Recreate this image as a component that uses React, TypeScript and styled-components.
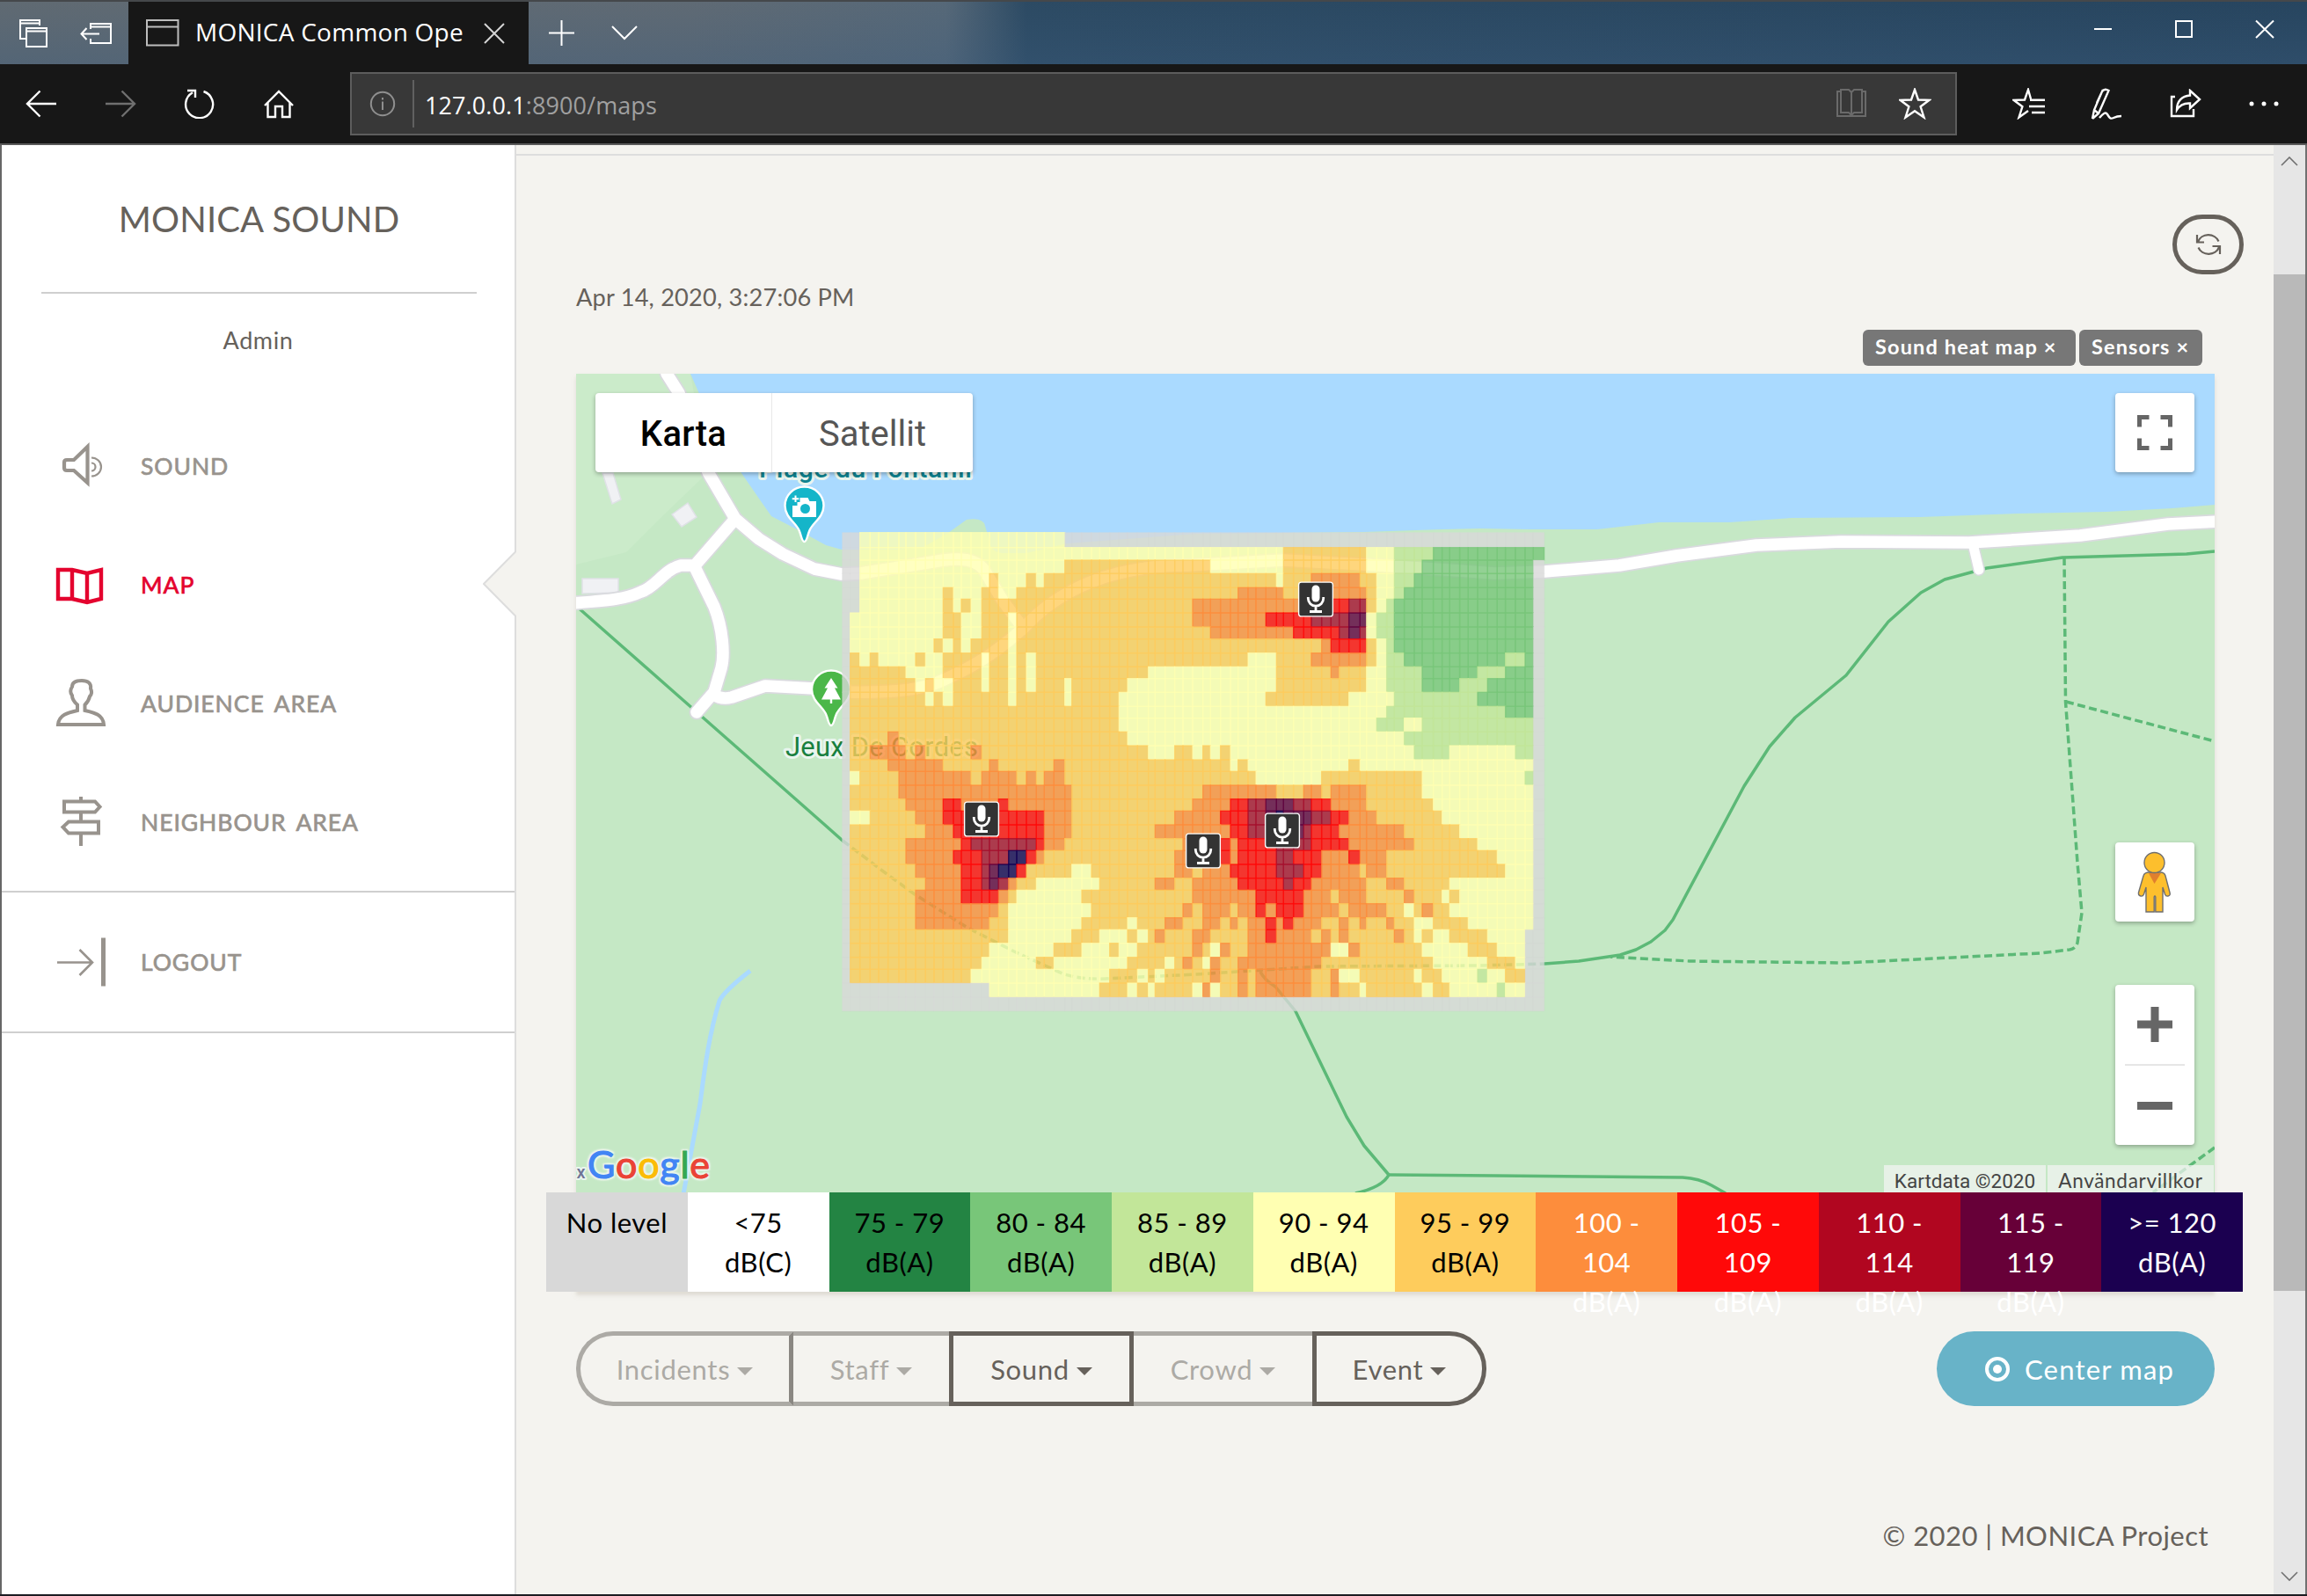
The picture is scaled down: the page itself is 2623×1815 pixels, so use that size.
import React from "react";
import styled, { createGlobalStyle } from "styled-components";

const GlobalStyle = createGlobalStyle`
  *, *::before, *::after { box-sizing: border-box; }
  html, body { margin: 0; padding: 0; background: #f4f3ef; overflow: hidden; }
  svg { display: block; }
`;

const muli = `Lato, "Open Sans", sans-serif`;
const segoe = `"Open Sans", "Noto Sans", sans-serif`;
const brown = "#66615b";

/* ---------- window frame ---------- */

const Window = styled.div`
  width: 2623px;
  height: 1815px;
  display: flex;
  flex-direction: column;
  border-bottom: 2px solid #1c1c22;
  background: #f4f3ef;
  font-family: ${muli};
  color: ${brown};
`;

const TitleBar = styled.div`
  height: 73px;
  flex: none;
  display: flex;
  align-items: stretch;
  border-top: 2px solid #45484b;
  background: linear-gradient(180deg, rgba(40, 70, 95, 0) 0%, rgba(60, 92, 125, 0.35) 100%),
    linear-gradient(90deg, #606a72 0%, #5f6a74 30%, #566878 41%, #2c4a63 44.5%, #27455f 100%);
`;

const TitleIcons = styled.div`
  width: 146px;
  display: flex;
  align-items: center;
  padding-left: 21px;
  gap: 36px;
`;

const Tab = styled.div`
  width: 455px;
  display: flex;
  align-items: center;
  padding: 0 27px 0 20px;
  background: #171717;
  color: #fff;
  font: 400 28px/38px ${segoe};
  letter-spacing: 0.25px;
  white-space: nowrap;
`;

const TabTitle = styled.span`
  flex: 1;
  margin-left: 18px;
  padding-bottom: 3px;
`;

const TabActions = styled.div`
  display: flex;
  align-items: center;
  gap: 41px;
  padding-left: 22px;
  flex: 1;
`;

const WindowButtons = styled.div`
  display: flex;
  gap: 70px;
  padding: 20px 37px 0 0;
`;

const Toolbar = styled.div`
  height: 92px;
  flex: none;
  display: flex;
  align-items: center;
  padding: 0 3px 0 2px;
  background: #171717;
  border-bottom: 2px solid #5a5a5a;
`;

const ToolButton = styled.div<{ $w?: number }>`
  width: ${(p) => p.$w ?? 90}px;
  display: flex;
  justify-content: center;
`;

const AddressBar = styled.div`
  width: 1827px;
  height: 72px;
  margin: 0 37px 0 36px;
  display: flex;
  align-items: center;
  border: 2px solid #5d5d5d;
  background: #383838;
  padding: 0 27px 0 20px;
  font: 400 27px/38px ${segoe};
  color: #a0a0a0;
`;

const AddressDivider = styled.div`
  width: 2px;
  height: 54px;
  margin: 0 12px 0 19px;
  background: #606060;
`;

const Url = styled.span`
  flex: 1;
  padding-top: 3px;
  letter-spacing: 0.1px;
  b { font-weight: 400; color: #fff; }
`;

const AddressIcons = styled.div`
  display: flex;
  gap: 36px;
`;

const Body = styled.div`
  flex: 1;
  display: flex;
  border-left: 2px solid #666;
  border-right: 2px solid #707070;
`;

/* ---------- sidebar ---------- */

const Sidebar = styled.aside`
  width: 585px;
  flex: none;
  background: #fff;
  border-right: 2px solid #dddddd;
`;

const Brand = styled.h1`
  margin: 0 43px 0 45px;
  padding: 60px 0 59px;
  border-bottom: 2px solid #cfcfcf;
  font: 400 40px/48px ${muli};
  letter-spacing: 0.15px;
  text-align: center;
  white-space: nowrap;
`;

const UserName = styled.div`
  margin: 37px 0 59px;
  font: 400 27px/32px ${muli};
  letter-spacing: 0.6px;
  text-align: center;
`;

const Nav = styled.nav`
  padding-bottom: 11px;
  border-bottom: 2px solid #cfcfcf;
`;

const NavItem = styled.div<{ $active?: boolean; $tall?: boolean }>`
  position: relative;
  display: flex;
  align-items: center;
  gap: 38px;
  height: ${(p) => (p.$tall ? 160 : 135)}px;
  padding-left: 60px;
  color: ${(p) => (p.$active ? "#e4032e" : "#98938d")};
  border-bottom: ${(p) => (p.$tall ? "2px solid #cfcfcf" : "none")};
  font: 400 26.5px/32px ${muli};
  letter-spacing: 0.95px;
  word-spacing: 4px;
  -webkit-text-stroke: 0.7px currentColor;
`;

const Notch = styled.svg`
  position: absolute;
  right: -2px;
  top: 29px;
`;

/* ---------- content ---------- */

const Content = styled.main`
  flex: 1;
  display: flex;
  flex-direction: column;
  padding: 10px 67px 0 68px;
`;

const TopRule = styled.div`
  height: 2px;
  flex: none;
  margin: 0 -67px 67px -68px;
  background: #dddddd;
`;

const RefreshButton = styled.button`
  align-self: flex-end;
  margin-right: -33px;
  width: 81px;
  height: 68px;
  padding: 0;
  display: flex;
  align-items: center;
  justify-content: center;
  border: 5px solid ${brown};
  border-radius: 34px;
  background: transparent;
`;

const Timestamp = styled.div`
  margin: 9px 0 21px;
  font: 400 27.2px/33px ${muli};
  letter-spacing: 0.2px;
`;

const Tags = styled.div`
  display: flex;
  justify-content: flex-end;
  gap: 4px;
  padding-right: 14px;
  margin-bottom: 9px;
`;

const Tag = styled.span<{ $w: number }>`
  width: ${(p) => p.$w}px;
  height: 41px;
  padding-left: 14px;
  border-radius: 6px;
  background: #777;
  color: #fff;
  font: 700 23.5px/39px ${muli};
  letter-spacing: 1.15px;
  white-space: nowrap;
`;

const MapCard = styled.section`
  width: 1863px;
  box-shadow: 0 4px 4px rgba(204, 197, 185, 0.5);
`;

const MapView = styled.div`
  position: relative;
  height: 931px;
  overflow: hidden;
  background: #c5e8c5;
`;

const Control = styled.div<{ $top: number; $h?: number }>`
  position: absolute;
  right: 23px;
  top: ${(p) => p.$top}px;
  width: 90px;
  height: ${(p) => p.$h ?? 90}px;
  display: flex;
  flex-direction: column;
  align-items: center;
  justify-content: center;
  border-radius: 4px;
  background: #fff;
  box-shadow: 0 2px 5px rgba(0, 0, 0, 0.3);
`;

const ZoomHalf = styled.div`
  flex: 1;
  display: flex;
  align-items: center;
`;

const ZoomRule = styled.div`
  width: 68px;
  height: 2px;
  background: #e6e6e6;
`;

const TypeControl = styled.div`
  position: absolute;
  left: 22px;
  top: 22px;
  width: 429px;
  height: 90px;
  display: flex;
  border-radius: 4px;
  background: #fff;
  box-shadow: 0 2px 5px rgba(0, 0, 0, 0.3);
`;

const TypeOption = styled.div<{ $selected?: boolean }>`
  flex: ${(p) => (p.$selected ? "0 0 201px" : "1")};
  border-right: ${(p) => (p.$selected ? "1px solid #e8e8e8" : "none")};
  text-align: center;
  font: ${(p) => (p.$selected ? 500 : 400)} 40px/94px Roboto, sans-serif;
  letter-spacing: ${(p) => (p.$selected ? "0.3px" : "0")};
  color: ${(p) => (p.$selected ? "#000" : "#565656")};
`;

const Attribution = styled.div`
  position: absolute;
  right: 1px;
  bottom: 0;
  display: flex;
  gap: 2px;
`;

const AttributionPart = styled.div<{ $w: number; $muli?: boolean }>`
  width: ${(p) => p.$w}px;
  height: 31px;
  background: rgba(245, 245, 245, 0.7);
  color: #444;
  text-align: center;
  white-space: nowrap;
  letter-spacing: ${(p) => (p.$muli ? "0.7px" : "0")};
  font: 400 22.5px/${(p) => (p.$muli ? 36 : 37)}px ${(p) => (p.$muli ? muli : "Roboto, sans-serif")};
`;

const Google = styled.div`
  position: absolute;
  left: 13px;
  bottom: 4px;
  font: 400 43px/56px ${muli};
  letter-spacing: 0.8px;
  -webkit-text-stroke: 1.2px currentColor;
`;

const Letter = styled.span<{ $c: string }>`
  color: ${(p) => p.$c};
  text-shadow: 0 0 3px #edf6ed, 0 0 3px #edf6ed, 2px 2px 2px #edf6ed, -2px -2px 2px #edf6ed, 2px -2px 2px #edf6ed,
    -2px 2px 2px #edf6ed;
`;

const Legend = styled.div`
  display: grid;
  grid-template-columns: repeat(12, 1fr);
  width: 1929px;
  height: 113px;
  margin-left: -34px;
`;

const LegendCell = styled.div<{ $bg: string; $light?: boolean }>`
  height: 113px;
  padding: 12px 20px 0;
  background: ${(p) => p.$bg};
  color: ${(p) => (p.$light ? "#fff" : "#000")};
  text-align: center;
  font: 400 31px/45px ${muli};
  letter-spacing: 0.5px;
`;

const Actions = styled.div`
  position: relative;
  display: flex;
  justify-content: space-between;
  margin-top: 45px;
`;

const ButtonGroup = styled.div`
  display: flex;
`;

const GroupButton = styled.div<{ $w: number; $on?: boolean; $pos?: "first" | "last"; $joined?: boolean }>`
  width: ${(p) => p.$w}px;
  height: 85px;
  display: flex;
  align-items: center;
  justify-content: center;
  gap: 8px;
  color: ${(p) => (p.$on ? brown : "#acaaa5")};
  border: 5px solid currentColor;
  border-left-width: ${(p) => (p.$joined ? 0 : 5)}px;
  border-right: ${(p) => (p.$pos === "first" ? "5px solid #8a8782" : p.$on ? "5px solid currentColor" : "0")};
  border-radius: ${(p) => (p.$pos === "first" ? "42px 0 0 42px" : p.$pos === "last" ? "0 42px 42px 0" : "0")};
  font: 400 31px/40px ${muli};
  letter-spacing: 0.7px;
`;

const Caret = styled.i`
  width: 0;
  height: 0;
  margin-top: 6px;
  border: 9px solid transparent;
  border-top-color: currentColor;
  border-bottom: 0;
`;

const CenterButton = styled.div`
  width: 316px;
  height: 85px;
  display: flex;
  align-items: center;
  gap: 16px;
  padding-left: 54px;
  border-radius: 43px;
  background: #68b3c8;
  color: #fff;
  font: 400 31px/40px ${muli};
  letter-spacing: 1.2px;
`;

const Footer = styled.footer`
  margin: 129px 7px 0 0;
  text-align: right;
  font: 400 31px/37px ${muli};
  letter-spacing: 0.45px;
`;

const Scrollbar = styled.div`
  width: 36px;
  flex: none;
  display: flex;
  flex-direction: column;
  align-items: center;
  background: #e6e6e6;
`;

const ScrollThumb = styled.div`
  width: 36px;
  height: 1156px;
  background: #b9b9b9;
`;

const ScrollArrow = styled.div<{ $h: number; $end?: boolean }>`
  height: ${(p) => p.$h}px;
  display: flex;
  align-items: ${(p) => (p.$end ? "flex-end" : "flex-start")};
  padding: 13px 0 15px;
`;

/* ---------- icons ---------- */

type IconProps = { w: number; h: number; sw?: number; color?: string; fill?: string; children: React.ReactNode };

const Icon = ({ w, h, sw = 2, color = "currentColor", fill = "none", children }: IconProps) => (
  <svg width={w} height={h} viewBox={`0 0 ${w} ${h}`} fill={fill} stroke={color} strokeWidth={sw}>
    {children}
  </svg>
);

const SoundIcon = () => (
  <Icon w={60} h={60} sw={4.2}>
    <path d="M11 26q0-3 3-3h8L37.500 8V49L22 35h-8q-3 0-3-3z" />
    <path d="M42 26.500a4.500 4.500 0 0 1 0 9M42 20.500a11 10.500 0 0 1 0 21" strokeWidth={2.2} />
  </Icon>
);
const MapIcon = () => (
  <Icon w={60} h={60} sw={4.4}>
    <path d="M4 13H20L37 17L53 13V46L37 50L20 46H4ZM20 13V46M37 17V50" />
  </Icon>
);
const UserIcon = () => (
  <Icon w={60} h={60} sw={4}>
    <path d="M4 54C5 43 15 40.500 26 38V31.500C22 28 20 25 20 21C17 17 18 14 20 11C20 6 25 4 31 4C38 4 42 7 41 13C43 17 42 20 40 22C39 27 37 29 34.500 31.500V38C46 40.500 55 43 56 54Z" />
  </Icon>
);
const SignIcon = () => (
  <Icon w={60} h={60} sw={4}>
    <path d="M11 6.500H46L51.500 12.500L46 18.500H11ZM50 29.500H16L9.500 35.500L16 42.500H50ZM30 1V6M30 19V29M30 43V57" />
  </Icon>
);
const LogoutIcon = () => (
  <Icon w={60} h={60} sw={2.600}>
    <path d="M3 30.500H43M28.500 16L43 30.500L28.500 45" />
    <path d="M55.500 2.500V57.500" strokeWidth={5} />
  </Icon>
);

/* ---------- heat map data ---------- */

/* Column and row edges of the noise grid, in thirds of a pixel. */
const COLS = [
  53, 80, 113, 148, 177, 209, 246, 270, 303, 337, 366, 397, 432, 459, 492, 529, 555, 586, 620, 648, 681, 715, 742, 775,
  812, 836, 870, 903, 931, 965, 997, 1026, 1060, 1097, 1120, 1154, 1187, 1215, 1248, 1283, 1309, 1343, 1377, 1403, 1437,
  1464, 1498, 1534, 1558, 1592, 1627, 1653, 1688, 1720, 1748, 1781, 1819, 1841, 1876, 1910, 1936, 1970, 2004, 2031, 2069,
  2099, 2125, 2159, 2188, 2220, 2254, 2287, 2315, 2349, 2382, 2410, 2447,
];
const ROWS = [
  47, 98, 141, 187, 235, 274, 321, 369, 410, 458, 505, 545, 592, 640, 680, 727, 774, 822, 862, 909, 956, 997, 1044, 1091,
  1132, 1179, 1226, 1267, 1313, 1361, 1402, 1448, 1496, 1537, 1584, 1632, 1679,
];

const LEVELS: Record<string, string> = {
  g: "#d8d8d8",
  G: "#78c679",
  c: "#c2e699",
  y: "#ffffb2",
  o: "#fecc5c",
  r: "#fd8d3c",
  R: "#ff0909",
  m: "#a50f2e",
  p: "#5f003e",
  b: "#110052",
};

/* Each entry is a level letter followed by the column at which its run ends. */
const GRID = [
  "g2 y24 g76",
  "g2 y48 o57 y60 c64 G76",
  "g2 y24 o40 y48 o57 y60 c63 G75 g76",
  "g2 y16 o17 y20 o21 y22 o47 y48 o51 r56 o58 y60 c62 G75 g76",
  "g2 y11 o12 y15 o17 y19 o43 r48 o51 r57 o58 y60 c61 G75 g76",
  "g2 y11 o12 y13 o14 y15 o38 r52 R55 m57 o58 y59 c60 G75 g76",
  "g1 y11 o13 y15 o18 y19 o38 r46 R51 m55 p57 y58 c60 G75 g76",
  "g1 y11 o13 y15 o18 y19 o40 r49 R54 m55 p56 m57 y58 c60 G75 g76",
  "g1 y10 o11 y12 o13 y14 o18 y19 o52 r53 R57 o58 y59 c60 G75 g76",
  "g1 o2 y3 o4 y8 o9 y11 o15 y16 o18 y19 o20 y21 o44 y47 o51 r57 o58 y59 c61 G72 c74 G75 g76",
  "g1 o7 y11 o15 y16 o18 y19 o20 y21 o33 y47 o53 r54 o57 y59 c63 G69 c72 G75 g76",
  "g1 o8 y9 o10 y12 o15 y16 o18 y19 o20 y21 o24 y25 o31 y47 o57 y59 c63 G67 c70 G75 g76",
  "g1 o9 y10 o11 y12 o18 y19 o24 y25 o30 y46 o55 y60 c69 G75 g76",
  "g1 o30 y59 c72 G75 g76",
  "g1 o30 y58 c61 y63 c75 g76",
  "g1 o5 r6 o31 y61 c75 g76",
  "g1 o3 r7 o8 r9 o14 r15 o33 y36 o38 y39 o40 y41 o42 y62 c66 y73 c75 g76",
  "g1 o5 r11 o16 r17 o23 r24 o42 y43 o44 y55 o56 y75 g76",
  "g1 y2 o6 r14 o15 r19 o20 r21 o22 r24 o45 y52 o63 y74 c75 g76",
  "g1 o6 r25 o39 r47 o50 r52 o53 r57 o63 y75 g76",
  "g1 o7 r11 R13 r17 R18 r25 o38 r42 R44 m46 p49 m51 R53 r57 o64 y75 g76",
  "g1 y3 o8 r11 R22 r25 o36 r41 R44 m46 p47 b48 p51 m53 R55 r58 o65 y75 g76",
  "g1 o9 r12 R22 r25 o34 r42 R44 m46 p50 m51 R54 r61 o67 y75 g76",
  "g1 o7 r13 R14 m21 R22 r24 o37 r41 R42 r43 R47 m51 R55 r62 o69 y75 g76",
  "g1 o7 r12 R15 m18 b20 R21 r22 o36 r41 R42 r43 R47 m49 R52 r55 R56 r59 o71 y75 g76",
  "g1 o8 r13 R15 m16 p17 b19 R20 o25 y27 o36 r38 o39 r42 R47 m50 R52 r56 o57 r59 o72 y75 g76",
  "g1 o9 r13 R15 m16 p17 m18 r19 o21 y28 o34 r36 o38 r43 R48 m49 R51 r57 o59 r61 o66 y75 g76",
  "g1 o8 r13 R17 r18 o19 y26 o38 r45 R50 r53 o54 r57 o61 r62 o65 y66 o67 y75 g76",
  "g1 o8 r17 o18 y27 o37 r38 o39 r42 o43 r45 R46 r47 R50 r54 o55 r59 o61 y62 o63 r64 o66 y75 g76",
  "g1 o8 r16 o18 y26 o31 y32 o35 r37 o39 r41 o42 r43 o44 r46 R47 r48 R49 r52 o54 r55 o56 r57 o59 r60 o62 y64 o68 y75 g76",
  "g1 o18 y25 o28 y31 o32 y33 o34 r35 o38 r40 o44 r46 R47 r51 o52 r53 o54 r55 o60 r61 o62 y63 o64 y66 o70 y74 g76",
  "g1 o16 y23 o26 y29 o30 y32 o38 r39 o40 y41 r42 o44 r53 y55 r56 o63 y68 o71 y74 g76",
  "g1 o15 y21 o23 y31 o35 y36 o37 r38 o39 y40 r41 o43 r52 o64 y70 o73 y74 g76",
  "g1 o14 y29 o32 y33 o34 y35 o40 r41 o43 r44 o45 r51 o53 r54 y56 o62 y63 o65 y69 c70 y72 o74 g76",
  "g16 y28 o31 y32 o33 y34 o38 y39 r40 y41 o43 r44 o45 r51 o53 r54 o56 y57 o63 y64 o66 y71 c72 y74 g76",
  "g76",
];

const cells = GRID.flatMap((row, r) => {
  let c = 0;
  return row.split(" ").flatMap((run) => {
    const end = Number(run.slice(1));
    const out: { x: number; y: number; w: number; h: number; level: string }[] = [];
    for (; c < end; c++) {
      out.push({ x: COLS[c], y: ROWS[r], w: COLS[c + 1] - COLS[c], h: ROWS[r + 1] - ROWS[r], level: run[0] });
    }
    return out;
  });
});

const HeatMap = () => (
  <g transform="translate(940 590) scale(0.33333)">
    {cells.map((c) => (
      <rect
        key={`${c.x}-${c.y}`}
        x={c.x}
        y={c.y}
        width={c.w}
        height={c.h}
        fill={LEVELS[c.level]}
        fillOpacity={0.8}
        stroke={LEVELS[c.level]}
        strokeOpacity={c.level === "g" ? 0.25 : 0.7}
        strokeWidth={4}
      />
    ))}
  </g>
);

const ROADS = [
  "M758 425L772 447L805 537L836 590L863 613L890 630L926 647L957 653L978 652L1023 645L1073 637Q1110 632 1120 650L1140 683L1163 714",
  "M836 590L790 643H774C755 648 745 668 729 673C710 682 690 683 650 686",
  "M790 645L812 690C822 715 824 745 820 760L812 787L792 810",
  "M812 790Q820 796 832 793L870 780L926 783L967 787C1010 788 1050 785 1073 773C1115 755 1140 735 1163 715C1190 685 1220 670 1240 662C1280 646 1320 643 1350 643L1460 637L1550 642L1630 647L1700 652L1756 650L1841 643L1906 632L1997 620L2093 616L2239 617L2365 609L2465 596L2522 593",
  "M2243 618L2250 648",
];

const PATHS = [
  "M655 689L906 910L940 940L958 956",
  "M2518 627L2486 630L2345 634L2259 646L2211 659L2184 674L2147 707L2099 768L2041 816L2012 849L1983 894L1967 924L1902 1046L1893 1058L1877 1071L1860 1080L1842 1086L1795 1093L1756 1096",
  "M1433 1105Q1437 1114 1450 1122L1473 1150L1531 1270L1551 1303L1579 1336Q1572 1350 1541 1357",
  "M1579 1336L1700 1337L1913 1339Q1932 1340 1946 1348L1962 1357",
];

const DASHED = [
  "M958 956L1007 993L1040 1017L1100 1055L1153 1082L1210 1108Q1230 1114 1257 1113L1360 1108L1500 1099L1683 1098L1756 1096",
  "M2347 634L2348.500 798L2362 981L2367 1038L2362 1072Q2360 1079 2353 1080L2319 1084L2098 1095L1921 1093L1831 1088",
  "M2349 798L2518 843",
  "M2518 1305L2448 1356",
];

const Mic = ({ x, y }: { x: number; y: number }) => (
  <g transform={`translate(${x} ${y})`}>
    <rect x={0.6} y={0.6} width={38.800} height={38.800} rx={3} fill="#333" stroke="#fff" strokeWidth={1.4} />
    <rect x={15.500} y={4} width={9} height={19} rx={4.500} fill="#fff" />
    <path d="M11.300 17.500V19a8.700 8.700 0 0 0 17.400 0V17.500M20 28V34M13 34H27" fill="none" stroke="#fff" strokeWidth={2.800} />
  </g>
);

const MapDrawing = () => (
  <svg width={1863} height={931} viewBox="655 425 1863 931">
    <rect x={655} y={425} width={1863} height={931} fill="#c5e8c5" />
    <path d="M655 425H785L805 537L750 590L712 628L655 642Z" fill="#cbebca" />
    <path
      d="M785 425L796 450L843 538L863 567L877 587L908 603L939 620L957 625H1020L1050 622L1078 606L1099 591Q1118 588 1120 598L1124 612Q1125 628 1140 629H1167L1213 618L1360 607L1550 605L1640 602L1683 601L1740 602H1816L1886 594H1967L2037 589L2183 588L2294 584L2395 582L2470 578L2518 574V425Z"
      fill="#aadaff"
    />
    <path d="M685 538H697L706 568L696 573ZM764 585L782 572L792 588L775 599ZM662 658H703V674L662 675Z" fill="#f0f1f4" stroke="#dfe1e6" strokeWidth={1.500} />
    <path d="M853 1104C835 1118 822 1130 818 1138C805 1180 800 1225 796 1255L777 1358" fill="none" stroke="#aadaff" strokeWidth={5} />
    <g fill="none" strokeLinejoin="round">
      <g stroke="#5cb977" strokeWidth={3.500}>
        {PATHS.map((d) => <path key={d} d={d} />)}
      </g>
      <g stroke="#5cb977" strokeWidth={3.500} strokeDasharray="9 4.5">
        {DASHED.map((d) => <path key={d} d={d} />)}
      </g>
      <g strokeLinecap="round">
        {ROADS.map((d, i) => <path key={d} d={d} stroke="#d9dade" strokeWidth={i === 4 ? 14 : 17} />)}
        {ROADS.map((d, i) => <path key={d} d={d} stroke="#fff" strokeWidth={i === 4 ? 11 : 13.500} />)}
      </g>
    </g>
    <g transform="translate(914.500 554)">
      <path d="M0 62C-3 62-3 56-6 49C-10 40-22 34-22 21A22 21.500 0 0 1 22 21C22 34 10 40 6 49C3 56 3 62 0 62Z" fill="#15b5c9" stroke="#fff" strokeWidth={2.400} />
      <path d="M-5 17V12H4L6 16H13.500V34H-13.500V21H-8V17Z" fill="#fff" />
      <circle cx={1} cy={24.500} r={5.500} fill="#15b5c9" />
      <path d="M-10 9.500V17M-13.800 13.200H-6.200" stroke="#fff" strokeWidth={2} />
    </g>
    <g transform="translate(945 763)">
      <path d="M0 62C-3 62-3 56-6 49C-10 40-22 34-22 21A22 21.500 0 0 1 22 21C22 34 10 40 6 49C3 56 3 62 0 62Z" fill="#4bb749" stroke="#fff" strokeWidth={2.400} />
      <path d="M0 8L7.500 19.500H4L11 32.500H1.200V37H-1.200V32.500H-11L-4 19.500H-7.500Z" fill="#fff" />
    </g>
    <g fontFamily="Roboto, sans-serif" fontWeight={500} stroke="#e9f5ee" strokeWidth={6} strokeLinejoin="round" paintOrder="stroke">
      <text x={863} y={543} fontSize={30} textLength={242} fill="#0f8390">Plage du Fontanil</text>
      <text x={893} y={860} fontSize={31} textLength={219} fill="#18803e" fontWeight={400}>Jeux De Cordes</text>
      <text x={655.500} y={1340} fontSize={20} strokeWidth={4} fill="#6f7496">x</text>
    </g>
    <HeatMap />
    <Mic x={1096} y={911.500} />
    <Mic x={1476} y={661.500} />
    <Mic x={1438} y={924.500} />
    <Mic x={1348} y={947.500} />
  </svg>
);

const PegMan = () => (
  <svg width={40} height={70} viewBox="0 0 40 70" stroke="#6f6f6f" strokeWidth={1.400} fill="#fdbf2d">
    <path d="M14 24H26Q31 24 32 28L37 47Q38 50.500 35 51Q32.500 51.500 31.500 49L29 41V69H20.800V52Q20 50 19.200 52V69H10V41L7.500 49Q6.500 51.500 4 51Q1 50.500 1.500 47L7 28Q8 24 14 24Z" />
    <path d="M13 25H27L19.500 37Z" fill="#e07f2e" stroke="none" />
    <circle cx={19.500} cy={13} r={11.500} />
  </svg>
);

const LEGEND: [string, string, boolean?][] = [
  ["No level", "#d8d8d8"],
  ["<75 dB(C)", "#ffffff"],
  ["75 - 79 dB(A)", "#238443"],
  ["80 - 84 dB(A)", "#78c679"],
  ["85 - 89 dB(A)", "#c2e699"],
  ["90 - 94 dB(A)", "#ffffb2"],
  ["95 - 99 dB(A)", "#fecc5c"],
  ["100 - 104 dB(A)", "#fd8d3c", true],
  ["105 - 109 dB(A)", "#ff0909", true],
  ["110 - 114 dB(A)", "#b10620", true],
  ["115 - 119 dB(A)", "#670038", true],
  [">= 120 dB(A)", "#1b0050", true],
];

const star = "M18 2L22 13.500L34.500 13.800L24.600 21.300L28.500 33.500L18 26.200L7.500 33.500L11.400 21.300L1.500 13.800L14 13.500Z";

export default function App() {
  return (
    <>
      <GlobalStyle />
      <Window>
        <TitleBar>
          <TitleIcons>
            <Icon w={34} h={34} color="#fff">
              <path d="M8 23H2V2H24V8M2 5.500H24M9 11H32V32H9ZM9 14.500H32" />
            </Icon>
            <Icon w={37} h={26} color="#fff">
              <path d="M12 8V2H35V24H12V19M12 5.500H35M1.500 13.500H22M7.500 7L1.500 13.500L7.500 20" />
            </Icon>
          </TitleIcons>
          <Tab>
            <Icon w={38} h={31} color="#bdbdbd">
              <path d="M1 1H36.500V29.500H1ZM1 8.500H36.500" />
            </Icon>
            <TabTitle>MONICA Common Ope</TabTitle>
            <Icon w={24} h={24} color="#d5d5d5">
              <path d="M1 1L23 23M23 1L1 23" />
            </Icon>
          </Tab>
          <TabActions>
            <Icon w={31} h={31} color="#fff">
              <path d="M15.500 1V30M1 15.500H30" />
            </Icon>
            <Icon w={30} h={17} color="#fff">
              <path d="M1 1L15 15L29 1" />
            </Icon>
          </TabActions>
          <WindowButtons>
            <Icon w={22} h={22} color="#fff"><path d="M1 11H21" /></Icon>
            <Icon w={22} h={22} color="#fff"><path d="M2 2H20V20H2Z" /></Icon>
            <Icon w={22} h={22} color="#fff"><path d="M1 1.500L21 21M21 1.500L1 21" /></Icon>
          </WindowButtons>
        </TitleBar>

        <Toolbar>
          <ToolButton>
            <Icon w={36} h={32} color="#fff" sw={2.400}><path d="M2 16H35M16.500 1.500L2 16L16.500 30.500" /></Icon>
          </ToolButton>
          <ToolButton>
            <Icon w={36} h={32} color="#6f6f6f" sw={2.400}><path d="M1 16H34M19.500 1.500L34 16L19.500 30.500" /></Icon>
          </ToolButton>
          <ToolButton>
            <Icon w={36} h={34} color="#fff" sw={2.400}>
              <path d="M22.500 3A15.500 15.500 0 1 1 10 4.200M4 2H13V10" />
            </Icon>
          </ToolButton>
          <ToolButton>
            <Icon w={36} h={34} color="#fff" sw={2.400}>
              <path d="M2 19L18 3L34 19M5.500 16V32H14V20H22V32H30.500V16" />
            </Icon>
          </ToolButton>
          <AddressBar>
            <Icon w={30} h={30} color="#8f8f8f">
              <circle cx={15} cy={15} r={13.200} />
              <path d="M15 12.500V22M15 8V10.500" />
            </Icon>
            <AddressDivider />
            <Url><b>127.0.0.1</b>:8900/maps</Url>
            <AddressIcons>
              <Icon w={36} h={34} color="#6a6a6a">
                <path d="M6 4H2V32H34V4H30M6 2H15L18 5L21 2H30V28H21L18 31L15 28H6ZM18 5V31" />
              </Icon>
              <Icon w={37} h={36} color="#fff" sw={2.400}><path d={star} /></Icon>
            </AddressIcons>
          </AddressBar>
          <ToolButton $w={89}>
            <Icon w={38} h={36} color="#fff" sw={2.400}>
              <path d="M20 13.800H37M19 21H37M22 28H37M21 12.500L18 2L14 13.500L1.500 13.800L11.400 21.300L7.500 33.500L18 26" />
            </Icon>
          </ToolButton>
          <ToolButton $w={89}>
            <Icon w={38} h={38} color="#fff" sw={2.400}>
              <path d="M2 36L4 26L13 5Q16 1 20.500 4L9 30L2 36M4 26L9 30M7 18L14 3M10 35C14 30 17 28 19 31S22 37 26 35S31 33 35 33" />
            </Icon>
          </ToolButton>
          <ToolButton $w={89}>
            <Icon w={36} h={34} color="#fff" sw={2.400}>
              <path d="M6 9H2V31H27V23M23 2L34 12L23 22V16.500C15 16 11 19 8 24C8 14 14 8 23 7.500Z" />
            </Icon>
          </ToolButton>
          <ToolButton $w={89}>
            <Icon w={34} h={8} color="none" fill="#fff">
              <circle cx={3} cy={4} r={2.500} />
              <circle cx={17} cy={4} r={2.500} />
              <circle cx={31} cy={4} r={2.500} />
            </Icon>
          </ToolButton>
        </Toolbar>

        <Body>
          <Sidebar>
            <Brand>MONICA SOUND</Brand>
            <UserName>Admin</UserName>
            <Nav>
              <NavItem><SoundIcon />SOUND</NavItem>
              <NavItem $active>
                <MapIcon />MAP
                <Notch width={38} height={76} viewBox="0 0 38 76">
                  <path d="M38 0.500L1 38L38 75.500" fill="#f4f3ef" stroke="#dddddd" strokeWidth={2} />
                </Notch>
              </NavItem>
              <NavItem><UserIcon />AUDIENCE AREA</NavItem>
              <NavItem><SignIcon />NEIGHBOUR AREA</NavItem>
            </Nav>
            <NavItem $tall><LogoutIcon />LOGOUT</NavItem>
          </Sidebar>

          <Content>
            <TopRule />
            <RefreshButton>
              <Icon w={30} h={28} color={brown} sw={2.200}>
                <path d="M2 3V11.500H10M3 11A12.500 11.500 0 0 1 26.500 10.500M28 25V16H19.500M27 17A12.500 11.500 0 0 1 3.500 17.500" />
              </Icon>
            </RefreshButton>
            <Timestamp>Apr 14, 2020, 3:27:06 PM</Timestamp>
            <Tags>
              <Tag $w={242}>Sound heat map ×</Tag>
              <Tag $w={140}>Sensors ×</Tag>
            </Tags>

            <MapCard>
              <MapView>
                <MapDrawing />
                <TypeControl>
                  <TypeOption $selected>Karta</TypeOption>
                  <TypeOption>Satellit</TypeOption>
                </TypeControl>
                <Control $top={22}>
                  <Icon w={40} h={40} color="#666" sw={5}>
                    <path d="M2.500 13.500V2.500H13.500M26.500 2.500H37.500V13.500M37.500 26.500V37.500H26.500M13.500 37.500H2.500V26.500" />
                  </Icon>
                </Control>
                <Control $top={533}><PegMan /></Control>
                <Control $top={695} $h={182}>
                  <ZoomHalf>
                    <Icon w={40} h={40} color="#666" sw={9}><path d="M20 0V40M0 20H40" /></Icon>
                  </ZoomHalf>
                  <ZoomRule />
                  <ZoomHalf>
                    <Icon w={40} h={9} color="#666" sw={9}><path d="M0 4.500H40" /></Icon>
                  </ZoomHalf>
                </Control>
                <Google>
                  <Letter $c="#4285f4">G</Letter>
                  <Letter $c="#ea4335">o</Letter>
                  <Letter $c="#fbbc05">o</Letter>
                  <Letter $c="#4285f4">g</Letter>
                  <Letter $c="#34a853">l</Letter>
                  <Letter $c="#ea4335">e</Letter>
                </Google>
                <Attribution>
                  <AttributionPart $w={184}>Kartdata ©2020</AttributionPart>
                  <AttributionPart $w={189} $muli>Användarvillkor</AttributionPart>
                </Attribution>
              </MapView>
              <Legend>
                {LEGEND.map(([label, bg, light]) => (
                  <LegendCell key={label} $bg={bg} $light={light}>{label}</LegendCell>
                ))}
              </Legend>
            </MapCard>

            <Actions>
              <ButtonGroup>
                <GroupButton $w={247} $pos="first">Incidents<Caret /></GroupButton>
                <GroupButton $w={177} $joined>Staff<Caret /></GroupButton>
                <GroupButton $w={210} $on>Sound<Caret /></GroupButton>
                <GroupButton $w={203} $joined>Crowd<Caret /></GroupButton>
                <GroupButton $w={198} $on $pos="last">Event<Caret /></GroupButton>
              </ButtonGroup>
              <CenterButton>
                <Icon w={30} h={30} color="#fff" sw={4}>
                  <circle cx={15} cy={15} r={12} />
                  <circle cx={15} cy={15} r={5} fill="#fff" stroke="none" />
                </Icon>
                Center map
              </CenterButton>
            </Actions>
            <Footer>© 2020 | MONICA Project</Footer>
          </Content>

          <Scrollbar>
            <ScrollArrow $h={147}>
              <Icon w={20} h={11} color="#707070" sw={1.600}><path d="M1 10L10 1L19 10" /></Icon>
            </ScrollArrow>
            <ScrollThumb />
            <ScrollArrow $h={345} $end>
              <Icon w={20} h={11} color="#707070" sw={1.600}><path d="M1 1L10 10L19 1" /></Icon>
            </ScrollArrow>
          </Scrollbar>
        </Body>
      </Window>
    </>
  );
}
